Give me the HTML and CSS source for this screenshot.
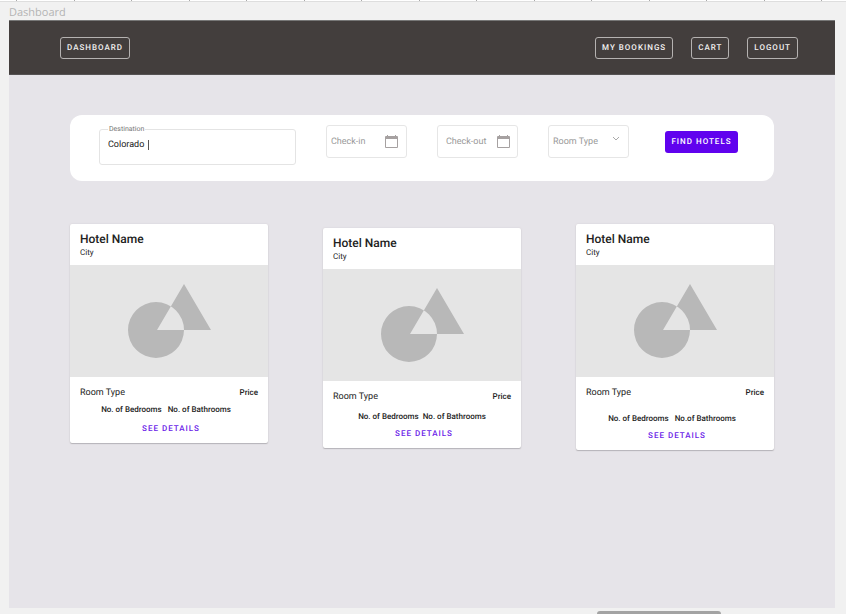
FILE: index.html
```html
<!DOCTYPE html>
<html lang="en">
<head>
<meta charset="utf-8">
<title>Dashboard</title>
<link rel="stylesheet" href="styles.css">
</head>
<body>
<div class="ruler"></div>
<div class="frame-name">Dashboard</div>
<div class="frame">
  <header class="topbar">
    <button class="nav-button" type="button">DASHBOARD</button>
    <nav class="nav-group">
      <button class="nav-button" type="button">MY BOOKINGS</button>
      <button class="nav-button" type="button">CART</button>
      <button class="nav-button" type="button">LOGOUT</button>
    </nav>
  </header>
  <main class="content">
    <form class="search">
      <fieldset class="destination">
        <legend><label for="destination">Destination</label></legend>
        <div class="destination-row">
          <input id="destination" type="text" value="Colorado">
          <span class="caret"></span>
        </div>
      </fieldset>
      <div class="controls">
        <div class="field">
          <input type="text" placeholder="Check-in" aria-label="Check-in">
          <svg class="calendar" viewBox="0 0 13 13" aria-hidden="true"><path fill-rule="evenodd" d="M2 0h1v1h7V0h1v1h1a1 1 0 0 1 1 1v10a1 1 0 0 1-1 1H1a1 1 0 0 1-1-1V2a1 1 0 0 1 1-1h1zM1 4v8h11V4z"/></svg>
        </div>
        <div class="field field-inset">
          <input type="text" placeholder="Check-out" aria-label="Check-out">
          <svg class="calendar" viewBox="0 0 13 13" aria-hidden="true"><path fill-rule="evenodd" d="M2 0h1v1h7V0h1v1h1a1 1 0 0 1 1 1v10a1 1 0 0 1-1 1H1a1 1 0 0 1-1-1V2a1 1 0 0 1 1-1h1zM1 4v8h11V4z"/></svg>
        </div>
        <div class="field">
          <select aria-label="Room Type"><option>Room Type</option></select>
          <svg class="chevron" viewBox="0 0 8 12" aria-hidden="true"><path d="M1 1l3 3 3-3"/></svg>
        </div>
        <button class="find" type="button">FIND HOTELS</button>
      </div>
    </form>
    <section class="cards">
      <article class="card card-short">
        <div class="card-head"><h2>Hotel Name</h2><p>City</p></div>
        <div class="media"><svg viewBox="0 0 83 74" aria-hidden="true"><path fill-rule="evenodd" d="M0 46a28 28 0 1 0 56 0a28 28 0 1 0-56 0zM56 0l27 46H29z"/></svg></div>
        <div class="card-body">
          <div class="room"><span>Room Type</span><strong>Price</strong></div>
          <div class="counts"><span>No. of Bedrooms</span><span>No. of Bathrooms</span></div>
          <a class="details" href="#">SEE DETAILS</a>
        </div>
      </article>
      <article class="card card-middle">
        <div class="card-head"><h2>Hotel Name</h2><p>City</p></div>
        <div class="media"><svg viewBox="0 0 83 74" aria-hidden="true"><path fill-rule="evenodd" d="M0 46a28 28 0 1 0 56 0a28 28 0 1 0-56 0zM56 0l27 46H29z"/></svg></div>
        <div class="card-body">
          <div class="room"><span>Room Type</span><strong>Price</strong></div>
          <div class="counts"><span>No. of Bedrooms</span><span>No. of Bathrooms</span></div>
          <a class="details" href="#">SEE DETAILS</a>
        </div>
      </article>
      <article class="card card-tall">
        <div class="card-head"><h2>Hotel Name</h2><p>City</p></div>
        <div class="media"><svg viewBox="0 0 83 74" aria-hidden="true"><path fill-rule="evenodd" d="M0 46a28 28 0 1 0 56 0a28 28 0 1 0-56 0zM56 0l27 46H29z"/></svg></div>
        <div class="card-body">
          <div class="room"><span>Room Type</span><strong>Price</strong></div>
          <div class="counts"><span>No. of Bedrooms</span><span>No.of Bathrooms</span></div>
          <a class="details" href="#">SEE DETAILS</a>
        </div>
      </article>
    </section>
  </main>
</div>
<div class="scroll-track"><div class="scroll-thumb"></div></div>
</body>
</html>
```
FILE: styles.css
```css
* { box-sizing: border-box; }

body {
  margin: 0;
  min-height: 100vh;
  display: flex;
  flex-direction: column;
  background: #f1f1f1;
  color: #222;
  font-family: Roboto, sans-serif;
  font-size: 8px;
  line-height: 12px;
  text-rendering: geometricPrecision;
}

button, input, select {
  margin: 0;
  font-family: inherit;
  color: inherit;
  text-rendering: inherit;
}

/* Canvas ruler */
.ruler {
  height: 2px;
  border-bottom: 1px solid #dedede;
  background: linear-gradient(90deg, #aaa 0 1px, #fff 1px 58px, #aaa 58px 59px, #fff 59px) 16px 0 / 115px 1px;
}

.frame-name {
  height: 18px;
  padding-left: 9px;
  font-family: "Open Sans", sans-serif;
  font-size: 11px;
  line-height: 22px;
  color: #b4b4b4;
}

.frame {
  flex: 1;
  margin: 0 11px 0 9px;
  background: #e6e4e9;
}

.topbar {
  display: flex;
  align-items: center;
  justify-content: space-between;
  height: 55px;
  padding: 0 37px 0 51px;
  border-top: 1px solid #777;
  border-bottom: 1px solid #555253;
  background: #433e3d;
}

.nav-group {
  display: flex;
  gap: 18px;
}

.nav-button {
  height: 22px;
  padding: 0 6px;
  border: 1px solid #b5b2b1;
  border-radius: 3px;
  background: transparent;
  color: #f3f2f2;
  font-size: 8px;
  font-weight: 500;
  letter-spacing: 1px;
}

.content { padding: 40px 61px; }

/* Search bar */
.search {
  display: flex;
  align-items: flex-start;
  gap: 30px;
  padding: 10px 36px 16px 29px;
  border-radius: 12px;
  background: #fff;
}

.destination {
  flex: 1;
  min-width: 0;
  height: 40px;
  margin: 0;
  padding: 0 8px;
  border: 1px solid #e4e4e4;
  border-radius: 3px;
}

.destination legend {
  padding: 0 1px;
  font-size: 7px;
  line-height: 8px;
  color: #777;
}

.destination-row {
  display: flex;
  align-items: center;
  height: 24px;
}

.destination input {
  width: 40px;
  padding: 0;
  border: 0;
  outline: 0;
  background: transparent;
  font-size: 9px;
}

.caret {
  width: 1px;
  height: 10px;
  background: #555;
}

.controls {
  display: flex;
  align-items: center;
  gap: 30px;
}

.field {
  display: flex;
  align-items: center;
  width: 81px;
  height: 33px;
  padding: 0 8px 0 4px;
  border: 1px solid #e6e6e6;
  border-radius: 3px;
}

.field-inset { padding: 0 7px 0 8px; }

.field input,
.field select {
  flex: 1;
  min-width: 0;
  height: 20px;
  padding: 0;
  border: 0;
  outline: 0;
  appearance: none;
  background: transparent;
  font-size: 9px;
  color: #999;
}

.field input::placeholder { color: #999; }

.calendar {
  flex: none;
  width: 13px;
  height: 13px;
  fill: #a6a1a1;
}

.chevron {
  flex: none;
  width: 8px;
  height: 12px;
  fill: none;
  stroke: #aaa;
}

.find {
  width: 73px;
  height: 22px;
  margin-left: 6px;
  padding: 0;
  border: 0;
  border-radius: 3px;
  background: #6002ee;
  color: #fff;
  font-size: 8px;
  font-weight: 500;
  letter-spacing: 1px;
  white-space: nowrap;
}

/* Hotel cards */
.cards {
  display: grid;
  grid-template-columns: repeat(3, 1fr);
  align-items: start;
  gap: 55px;
  margin-top: 43px;
}

.card {
  border-radius: 2px;
  background: #fff;
  box-shadow: 0 1px 1px #b5b3b8, 0 0 2px #d0ced3;
}

.card-middle { margin-top: 4px; }

.card-head {
  height: 41px;
  padding: 8px 10px 0;
}

.card-head h2 {
  margin: 0;
  font-size: 12px;
  font-weight: 500;
  line-height: 15px;
}

.card-head p { margin: 0; }

.media {
  display: flex;
  align-items: center;
  justify-content: center;
  height: 112px;
  background: #e5e5e5;
}

.media svg {
  width: 83px;
  height: 74px;
  fill: #b8b8b8;
}

.card-body { padding: 8px 10px; }

.room {
  display: flex;
  align-items: center;
  justify-content: space-between;
  font-size: 9px;
  line-height: 16px;
}

.room strong {
  font-size: 8px;
  font-weight: 500;
}

.counts {
  display: flex;
  justify-content: center;
  gap: 6px;
  margin-top: 3px;
  padding-right: 6px;
  font-weight: 500;
}

.card-middle .counts {
  gap: 4px;
  margin-top: 6px;
  padding-right: 0;
}

.card-tall .counts { margin-top: 12px; }

.details {
  display: block;
  margin-top: 5px;
  padding-left: 4px;
  text-align: center;
  font-weight: 500;
  letter-spacing: 1px;
  text-decoration: none;
  color: #6a1be8;
}

.card-short .details { margin-top: 7px; }

/* Horizontal scrollbar of the canvas */
.scroll-track {
  display: flex;
  justify-content: flex-end;
  height: 6px;
  padding: 3px 125px 0;
}

.scroll-thumb {
  width: 124px;
  border-radius: 3px 3px 0 0;
  background: #a3a3a3;
}
```
